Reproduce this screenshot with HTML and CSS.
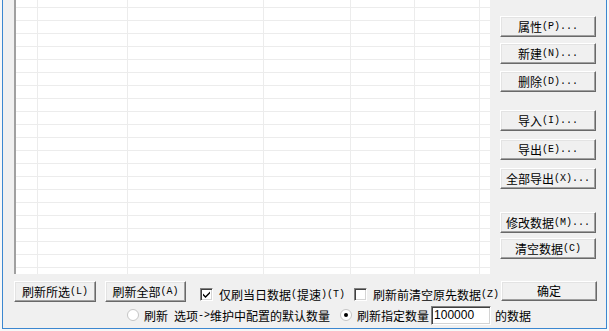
FILE: index.html
```html
<!DOCTYPE html>
<html lang="zh">
<head>
<meta charset="utf-8">
<link rel="stylesheet" href="styles.css">
</head>
<body>
<div class="window">
  <div class="main">
    <div class="list"></div>
    <div class="side">
      <button class="btn s1">属性<span class="k">(P)...</span></button>
      <button class="btn s2">新建<span class="k">(N)...</span></button>
      <button class="btn s3">删除<span class="k">(D)...</span></button>
      <button class="btn s4">导入<span class="k">(I)...</span></button>
      <button class="btn s5">导出<span class="k">(E)...</span></button>
      <button class="btn s6">全部导出<span class="k">(X)...</span></button>
      <button class="btn s7">修改数据<span class="k">(M)...</span></button>
      <button class="btn s8">清空数据<span class="k">(C)</span></button>
    </div>
  </div>
  <div class="row1">
    <button class="btn sel">刷新所选<span class="k">(L)</span></button>
    <button class="btn all">刷新全部<span class="k">(A)</span></button>
    <label class="chk c1"><span class="box"><svg width="9" height="9" viewBox="0 0 9 9"><path d="M1 3.5 L3.5 6 L8 1.5 L8 3.5 L3.5 8 L1 5.5 Z" fill="#000"/></svg></span>仅刷当日数据<span class="k">(</span>提速<span class="k">)(T)</span></label>
    <label class="chk c2"><span class="box"></span>刷新前清空原先数据<span class="k">(Z)</span></label>
    <button class="btn ok">确定</button>
  </div>
  <div class="row2">
    <label class="radio r1"><span class="dot"><svg width="12" height="12" viewBox="0 0 12 12"><circle cx="6" cy="6" r="5.5" fill="#fff" stroke="#c4c4c4"/></svg></span>刷新<span class="k">&nbsp;</span>选项<span class="k">-&gt;</span>维护中配置的默认数量</label>
    <label class="radio r2"><span class="dot"><svg width="12" height="12" viewBox="0 0 12 12"><circle cx="6" cy="6" r="5.5" fill="#fff" stroke="#c4c4c4"/><circle cx="6" cy="6" r="2" fill="#000"/></svg></span>刷新指定数量</label>
    <span class="input">100000</span>
    <span class="tail">的数据</span>
  </div>
</div>
</body>
</html>
```

FILE: styles.css
```css
html, body {
  margin: 0;
  padding: 0;
  background: #f7f7f7;
}
body {
  font-family: "Noto Sans CJK SC", "Noto Sans", sans-serif;
  font-size: 12px;
  color: #000;
}
.window {
  margin-left: 2px;
  width: 605px;
  height: 329px;
  box-sizing: border-box;
  border-left: 1px solid #3b87d0;
  border-right: 1px solid #3b87d0;
  border-bottom: 1px solid #3b87d0;
  background: #f0f0f0;
  padding-left: 11px;
  padding-right: 9px;
}
.main {
  display: flex;
  height: 274px;
}
.list {
  width: 476px;
  height: 274px;
  box-sizing: border-box;
  border-left: 2px solid #a0a0a0;
  background-color: #fff;
  background-image:
    linear-gradient(#ececec, #ececec),
    linear-gradient(#ececec, #ececec),
    linear-gradient(#ececec, #ececec),
    linear-gradient(#ececec, #ececec),
    linear-gradient(#ececec, #ececec),
    linear-gradient(#ececec, #ececec),
    repeating-linear-gradient(to bottom, #ececec 0 1px, transparent 1px 13px);
  background-size: 1px 100%, 1px 100%, 1px 100%, 1px 100%, 1px 100%, 1px 100%, 100% 13px;
  background-position: 21px 0, 111px 0, 247px 0, 334px 0, 398px 0, 463px 0, 0 7px;
  background-repeat: no-repeat, no-repeat, no-repeat, no-repeat, no-repeat, no-repeat, repeat;
}
.side {
  margin-left: 10px;
  width: 96px;
  display: flex;
  flex-direction: column;
}
.btn {
  font: inherit;
  color: #000;
  background: #f0f0f0;
  height: 21px;
  padding: 0;
  box-sizing: border-box;
  border: 1px solid;
  border-color: #fff #696969 #696969 #fff;
  box-shadow: inset -1px -1px 0 #a0a0a0, inset 1px 1px 0 #e3e3e3;
  display: flex;
  align-items: center;
  justify-content: center;
  line-height: 12px;
}
.side .btn { width: 96px; flex: none; }
.s1 { margin-top: 16px; }
.s2 { margin-top: 6px; }
.s3 { margin-top: 7px; }
.s4 { margin-top: 18px; }
.s5 { margin-top: 8px; }
.s6 { margin-top: 8px; }
.s7 { margin-top: 23px; }
.s8 { margin-top: 5px; }
.k {
  font-family: "Liberation Mono", "DejaVu Sans Mono", monospace;
  font-size: 10px;
  white-space: pre;
}
.row1 {
  display: flex;
  align-items: flex-start;
  margin-top: 7px;
  height: 22px;
}
.sel { width: 82px; }
.all { width: 81px; margin-left: 9px; }
.chk {
  display: flex;
  align-items: center;
  height: 13px;
  margin-top: 7px;
  line-height: 13px;
}
.c1 { margin-left: 14px; }
.c2 { margin-left: 9px; }
.box {
  width: 13px;
  height: 13px;
  box-sizing: border-box;
  border: 1px solid;
  border-color: #808080 #fff #fff #808080;
  box-shadow: inset 1px 1px 0 #404040, inset -1px -1px 0 #d4d4d4;
  background: #fff;
  display: flex;
  align-items: center;
  justify-content: center;
  margin-right: 6px;
}
.box svg { display: block; }
.ok {
  width: 96px;
  height: 20px;
  margin-left: auto;
}
.row2 {
  display: flex;
  align-items: center;
  margin-top: 2px;
  height: 20px;
}
.radio {
  display: flex;
  align-items: center;
  line-height: 13px;
}
.r1 { margin-left: 113px; }
.r2 { margin-left: 10px; }
.dot {
  width: 12px;
  height: 12px;
  margin-right: 5px;
}
.dot svg { display: block; }
.input {
  margin-left: 2px;
  width: 60px;
  height: 19px;
  box-sizing: border-box;
  background: #fff;
  border: 1px solid;
  border-color: #808080 #fff #fff #808080;
  box-shadow: inset 1px 1px 0 #404040, inset -1px -1px 0 #d4d4d4;
  font-family: "Liberation Sans", Arial, sans-serif;
  font-size: 12px;
  line-height: 16px;
  padding-left: 2px;
}
.tail { margin-left: 4px; }
```
